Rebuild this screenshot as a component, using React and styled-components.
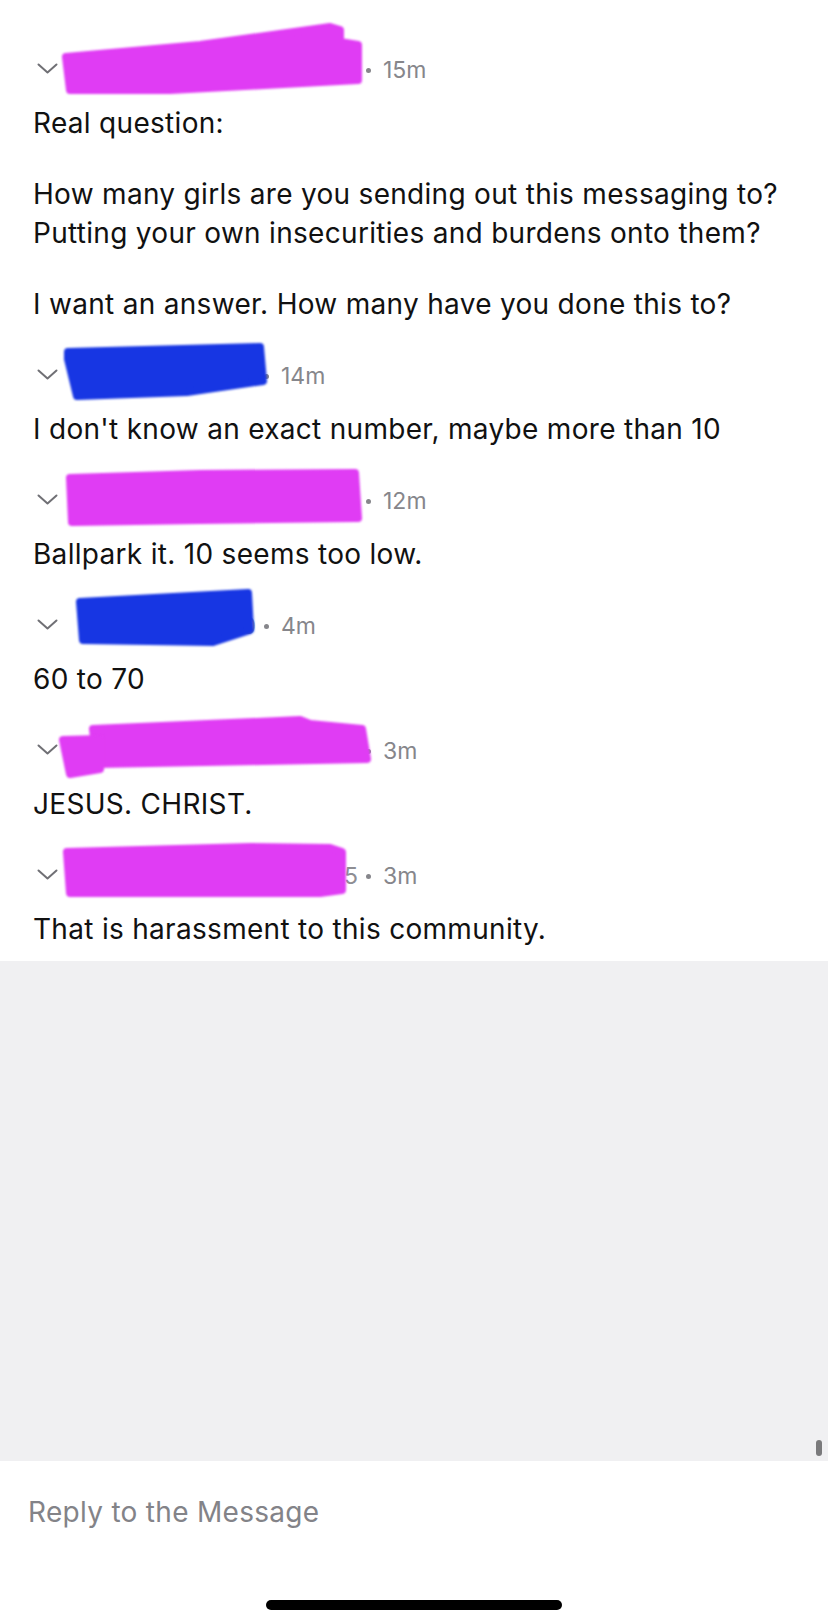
import React from "react";
import styled, { createGlobalStyle } from "styled-components";

const GlobalStyle = createGlobalStyle`
  html, body {
    margin: 0;
    padding: 0;
    background: #ffffff;
  }
  body {
    font-family: Inter, Roboto, "Liberation Sans", sans-serif;
    -webkit-font-smoothing: antialiased;
  }
`;

const MAGENTA = "#e03cf4";
const BLUE = "#1736e3";

const comments = [
  {
    time: "15m",
    nameWidth: 292,
    color: MAGENTA,
    marks: [
      "66,37 200,25 330,7 340,10 340,22 358,25 358,60 170,70 70,70",
    ],
    body: [
      "Real question:",
      "How many girls are you sending out this messaging to?\nPutting your own insecurities and burdens onto them?",
      "I want an answer. How many have you done this to?",
    ],
  },
  {
    time: "14m",
    nameWidth: 190,
    color: BLUE,
    marks: ["68,26 260,21 263,55 187,66 77,70 68,33"],
    body: ["I don't know an exact number, maybe more than 10"],
  },
  {
    time: "12m",
    nameWidth: 292,
    color: MAGENTA,
    marks: ["70,27 200,23 355,22 358,67 200,69 72,71"],
    body: ["Ballpark it. 10 seems too low."],
  },
  {
    time: "4m",
    nameWidth: 190,
    tail: "0",
    color: BLUE,
    marks: ["80,26 248,17 250,54 213,66 83,64"],
    body: ["60 to 70"],
  },
  {
    time: "3m",
    nameWidth: 292,
    color: MAGENTA,
    marks: [
      "93,28 300,19 310,23 362,28 367,58 97,63",
      "63,39 100,38 100,68 70,73",
    ],
    body: ["JESUS. CHRIST."],
  },
  {
    time: "3m",
    nameWidth: 292,
    tail: "5",
    color: MAGENTA,
    marks: ["67,26 250,21 330,22 342,26 342,64 320,67 70,67"],
    body: ["That is harassment to this community."],
  },
];

const Screen = styled.div`
  display: flex;
  flex-direction: column;
  width: 828px;
  height: 1624px;
  overflow: hidden;
`;

const Thread = styled.div`
  display: flex;
  flex-direction: column;
  gap: 32px;
  padding: 50px 0 12px 33px;
  background: #ffffff;
`;

const Comment = styled.div`
  display: flex;
  flex-direction: column;
`;

const Meta = styled.div`
  position: relative;
  display: flex;
  align-items: center;
  height: 40px;
  color: #86868b;
  font-size: 23px;
`;

const Chevron = styled.svg`
  width: 21px;
  height: 11px;
  margin-left: 4px;
  margin-right: 8px;
  margin-top: -3px;
  flex-shrink: 0;
`;

const NameSlot = styled.span`
  width: ${(p) => p.$width}px;
  text-align: right;
  color: #8e8e93;
  flex-shrink: 0;
`;

const Dot = styled.span`
  width: 5px;
  height: 5px;
  border-radius: 50%;
  background: #86868b;
  margin: 0 12px 0 8px;
  flex-shrink: 0;
`;

const Time = styled.span`
  line-height: 1;
`;

const Redaction = styled.svg`
  position: absolute;
  left: -33px;
  top: calc(50% - 50px);
  width: 828px;
  height: 100px;
  pointer-events: none;
  overflow: visible;
`;

const Body = styled.div`
  display: flex;
  flex-direction: column;
  gap: 32px;
  margin-top: 14px;
  color: #111111;
  font-size: 28px;
  letter-spacing: 0.3px;
  line-height: 39px;
`;

const Para = styled.p`
  margin: 0;
  white-space: pre-line;
`;

const Panel = styled.div`
  position: relative;
  flex: 1;
  background: #f0f0f2;
`;

const ScrollThumb = styled.div`
  position: absolute;
  right: 6px;
  bottom: 5px;
  width: 6px;
  height: 16px;
  border-radius: 3px;
  background: #7a7a7c;
`;

const Composer = styled.div`
  display: flex;
  flex-direction: column;
  align-items: center;
  height: 163px;
  background: #ffffff;
`;

const Placeholder = styled.div`
  align-self: stretch;
  padding: 32px 0 0 28px;
  color: #838388;
  font-size: 28px;
  letter-spacing: 0.3px;
  line-height: 38px;
`;

const HomeBar = styled.div`
  width: 296px;
  height: 10px;
  border-radius: 5px;
  background: #000000;
  margin-top: auto;
  margin-bottom: 14px;
`;

const CommentItem = ({ c }) => (
  <Comment>
    <Meta>
      <Chevron viewBox="0 0 21 11">
        <polyline
          points="1.5,1.5 10.5,9.5 19.5,1.5"
          fill="none"
          stroke="#707075"
          strokeWidth="2"
          strokeLinecap="round"
          strokeLinejoin="round"
        />
      </Chevron>
      <NameSlot $width={c.nameWidth}>{c.tail || ""}</NameSlot>
      <Dot />
      <Time>{c.time}</Time>
      <Redaction viewBox="0 0 828 100">
        {c.marks.map((pts, i) => (
          <polygon
            key={i}
            points={pts}
            fill={c.color}
            stroke={c.color}
            strokeWidth="8"
            strokeLinejoin="round"
            style={{ filter: "blur(1px)" }}
          />
        ))}
      </Redaction>
    </Meta>
    <Body>
      {c.body.map((t, i) => (
        <Para key={i}>{t}</Para>
      ))}
    </Body>
  </Comment>
);

export default function App() {
  return (
    <>
      <GlobalStyle />
      <Screen>
        <Thread>
          {comments.map((c, i) => (
            <CommentItem key={i} c={c} />
          ))}
        </Thread>
        <Panel>
          <ScrollThumb />
        </Panel>
        <Composer>
          <Placeholder>Reply to the Message</Placeholder>
          <HomeBar />
        </Composer>
      </Screen>
    </>
  );
}
